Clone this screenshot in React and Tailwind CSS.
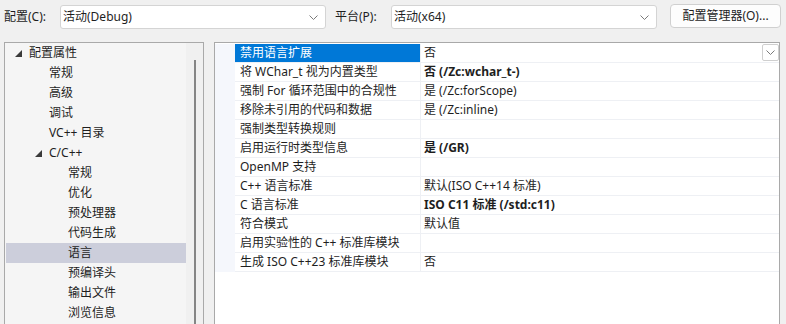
import React from "react";

const font = "font-['Noto_Sans','Noto_Sans_CJK_SC',sans-serif]";

const tree = [
  { label: "配置属性", level: 0, open: true },
  { label: "常规", level: 1 },
  { label: "高级", level: 1 },
  { label: "调试", level: 1 },
  { label: "VC++ 目录", level: 1 },
  { label: "C/C++", level: 1, open: true },
  { label: "常规", level: 2 },
  { label: "优化", level: 2 },
  { label: "预处理器", level: 2 },
  { label: "代码生成", level: 2 },
  { label: "语言", level: 2, selected: true },
  { label: "预编译头", level: 2 },
  { label: "输出文件", level: 2 },
  { label: "浏览信息", level: 2 },
];

const props = [
  { name: "禁用语言扩展", value: "否", selected: true },
  { name: "将 WChar_t 视为内置类型", value: "否 (/Zc:wchar_t-)", bold: true },
  { name: "强制 For 循环范围中的合规性", value: "是 (/Zc:forScope)" },
  { name: "移除未引用的代码和数据", value: "是 (/Zc:inline)" },
  { name: "强制类型转换规则", value: "" },
  { name: "启用运行时类型信息", value: "是 (/GR)", bold: true },
  { name: "OpenMP 支持", value: "" },
  { name: "C++ 语言标准", value: "默认(ISO C++14 标准)" },
  { name: "C 语言标准", value: "ISO C11 标准 (/std:c11)", bold: true },
  { name: "符合模式", value: "默认值" },
  { name: "启用实验性的 C++ 标准库模块", value: "" },
  { name: "生成 ISO C++23 标准库模块", value: "否" },
];

function Chevron({ className = "" }) {
  return (
    <svg width="9" height="5" viewBox="0 0 9 5" className={className}>
      <path d="M0.5 0.5 L4.5 4.5 L8.5 0.5" fill="none" stroke="#7a7a7a" strokeWidth="1" />
    </svg>
  );
}

function Triangle() {
  return (
    <svg width="7" height="7" viewBox="0 0 7 7" className="shrink-0">
      <polygon points="7,0 7,7 0,7" fill="#3a3a3a" />
    </svg>
  );
}

function Combo({ text, width }) {
  return (
    <div
      className={`${width} h-[24px] bg-white border border-[#d4d4d4] rounded-[3px] flex items-center justify-between pl-[2px] pr-[7px]`}
    >
      <span>{text}</span>
      <Chevron />
    </div>
  );
}

function TreeRow({ item }) {
  const pad = {
    0: "pl-[9px]",
    1: item.open ? "pl-[29px]" : "pl-[43px]",
    2: "pl-[62px]",
  }[item.level];
  return (
    <div
      className={`h-[20px] flex items-center gap-[7px] ${pad} ${
        item.selected ? "bg-[#cccedb]" : ""
      }`}
    >
      {item.open && <Triangle />}
      <span className="text-[#1e1e1e]">{item.label}</span>
    </div>
  );
}

function PropRow({ row, index }) {
  return (
    <div className="flex h-[19px]">
      <div className="w-[20px] bg-[#f5f7fc]" />
      <div
        className={`w-[185px] flex items-center pl-[5px] border-b border-[#eef0f4] ${
          row.selected ? "bg-[#0078d7] text-white border-[#0078d7]" : "text-[#1e1e1e]"
        }`}
      >
        {row.name}
      </div>
      <div
        className={`flex-1 flex items-center justify-between pl-[3px] border-b border-l border-[#eef0f4] ${
          row.bold ? "font-bold" : ""
        }`}
      >
        <span className="text-[#1e1e1e]">{row.value}</span>
        {index === 0 && (
          <div className="w-[17px] h-[17px] mt-[-2px] border border-[#cfcfcf] rounded-[2px] bg-white flex items-center justify-center">
            <Chevron />
          </div>
        )}
      </div>
    </div>
  );
}

export default function App() {
  return (
    <div className={`w-[786px] h-[324px] overflow-hidden bg-[#f0f0f0] text-[12px] leading-none ${font}`}>
      <div className="flex items-center h-[24px] mt-[5px] text-[#1e1e1e]">
        <span className="ml-[4px] w-[56px]">配置(C):</span>
        <Combo text="活动(Debug)" width="w-[266px]" />
        <span className="ml-[9px] w-[56px]">平台(P):</span>
        <Combo text="活动(x64)" width="w-[266px]" />
        <div className="ml-[13px] w-[111px] h-[24px] -mt-[2px] bg-[#fdfdfd] border border-[#d0d0d0] rounded-[4px] flex items-center justify-center">
          配置管理器(O)...
        </div>
      </div>

      <div className="flex mt-[13px] ml-[4px] h-[300px]">
        <div className="w-[200px] border border-[#a9a9a9] bg-[#f5f5f5] flex">
          <div className="flex-1 pl-px">
            {tree.map((t, i) => (
              <TreeRow key={i} item={t} />
            ))}
          </div>
          <div className="w-[17px] bg-[#f0f0f0] flex justify-center pt-[17px]">
            <div className="w-[2px] h-full bg-[#858585]" />
          </div>
        </div>

        <div className="ml-[10px] w-[566px] border border-[#a9a9a9] bg-white pt-px">
          {props.map((r, i) => (
            <PropRow key={i} row={r} index={i} />
          ))}
        </div>
      </div>
    </div>
  );
}
